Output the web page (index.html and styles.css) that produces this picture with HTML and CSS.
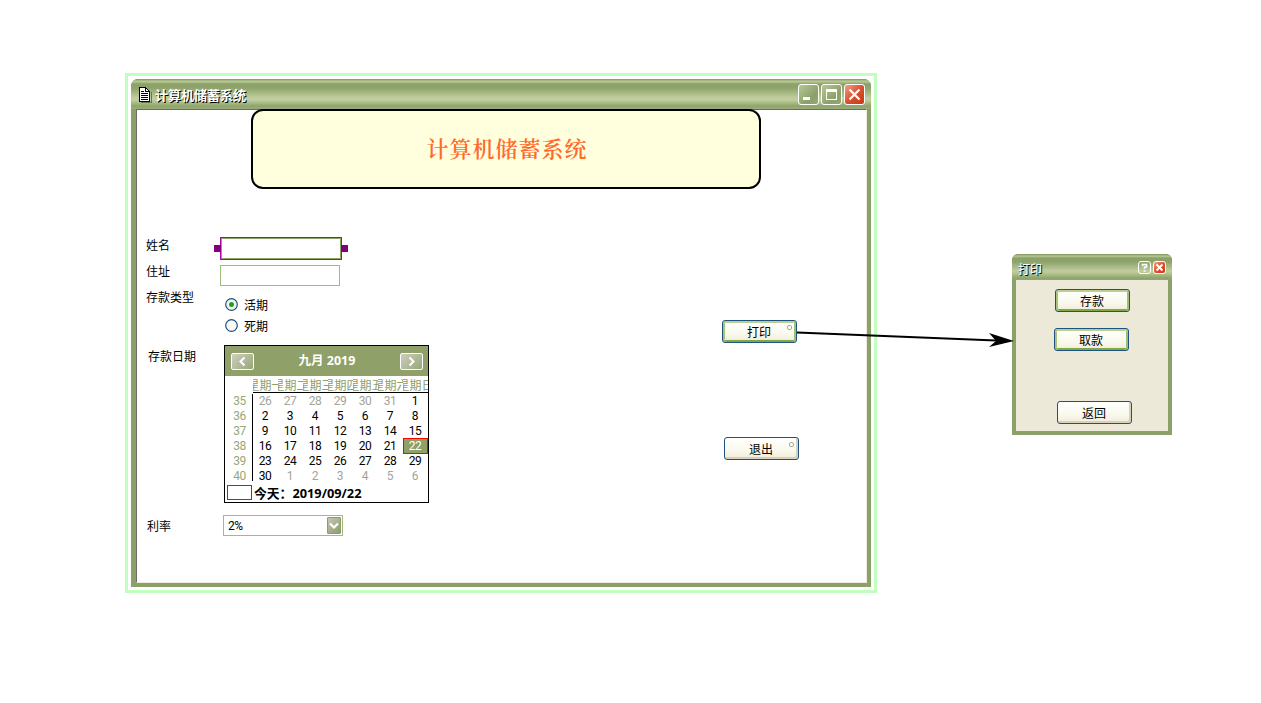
FILE: index.html
```html
<!DOCTYPE html>
<html lang="zh-CN">
<head>
<meta charset="utf-8">
<title>计算机储蓄系统</title>
<link rel="stylesheet" href="styles.css">
</head>
<body>
<main class="canvas">
  <section class="selection">
    <div class="window">
      <header class="titlebar">
        <svg class="doc-icon" width="14" height="16" viewBox="0 0 14 16" shape-rendering="crispEdges"><path d="M3 15h10V5h1v11H3z" fill="#66784a"/><path d="M1 0h7v1h1v1h1v1h1v1h1v11H1z" fill="#000"/><path d="M2 1h5v4h4v9H2zM8 2v2h2V3H9V2z" fill="#fff"/><path d="M3 4h3v1H3zM3 6h7v1H3zM3 8h7v1H3zM3 10h7v1H3zM3 12h7v1H3z" fill="#000"/></svg>
        <h1 class="caption">计算机储蓄系统</h1>
        <div class="controls">
          <span class="control"><svg width="17" height="17"><path d="M3 11h7v3H3z" fill="#fff"/></svg></span>
          <span class="control"><svg width="17" height="17"><path d="M3 3h11v11H3zM4 6v7h9V6z" fill="#fff" fill-rule="evenodd"/></svg></span>
          <span class="control close"><svg width="17" height="17"><path d="M3.500 3.500l10 10M13.500 3.500l-10 10" stroke="#fff" stroke-width="2.200"/></svg></span>
        </div>
      </header>
      <div class="client">
        <div class="banner">计算机储蓄系统</div>
        <div class="content">
          <form class="form">
            <div class="row row-name"><label class="label">姓名</label><div class="field field-selected"><i class="handle handle-left"></i><i class="handle handle-right"></i></div></div>
            <div class="row row-address"><label class="label">住址</label><div class="field"></div></div>
            <div class="row row-type"><label class="label">存款类型</label>
              <div class="radios">
                <span class="radio"><svg width="13" height="13"><circle cx="6.500" cy="6.500" r="5.800" fill="#f4f5f0" stroke="#1d5281" stroke-width="1.200"/><circle cx="6.500" cy="6.500" r="2.500" fill="#21a121"/></svg><span class="radio-text">活期</span></span>
                <span class="radio"><svg width="13" height="13"><circle cx="6.500" cy="6.500" r="5.800" fill="#f8f8f5" stroke="#1d5281" stroke-width="1.200"/></svg><span class="radio-text">死期</span></span>
              </div>
            </div>
            <div class="row row-date"><label class="label">存款日期</label>
              <div class="calendar">
                <div class="month">
                  <span class="nav"><svg width="21" height="15"><path d="M12.500 3.500l-4 4 4 4" fill="none" stroke="#fff" stroke-width="2"/></svg></span>
                  <strong>九月 2019</strong>
                  <span class="nav"><svg width="21" height="15"><path d="M8.500 3.500l4 4-4 4" fill="none" stroke="#fff" stroke-width="2"/></svg></span>
                </div>
                <div class="weekdays"><span>星期一</span><span>星期二</span><span>星期三</span><span>星期四</span><span>星期五</span><span>星期六</span><span>星期日</span></div>
                <div class="dates">
                  <div class="weeks"><span>35</span><span>36</span><span>37</span><span>38</span><span>39</span><span>40</span></div>
                  <div class="days">
                    <span class="dim">26</span><span class="dim">27</span><span class="dim">28</span><span class="dim">29</span><span class="dim">30</span><span class="dim">31</span><span>1</span>
                    <span>2</span><span>3</span><span>4</span><span>5</span><span>6</span><span>7</span><span>8</span>
                    <span>9</span><span>10</span><span>11</span><span>12</span><span>13</span><span>14</span><span>15</span>
                    <span>16</span><span>17</span><span>18</span><span>19</span><span>20</span><span>21</span><span class="selected">22</span>
                    <span>23</span><span>24</span><span>25</span><span>26</span><span>27</span><span>28</span><span>29</span>
                    <span>30</span><span class="dim">1</span><span class="dim">2</span><span class="dim">3</span><span class="dim">4</span><span class="dim">5</span><span class="dim">6</span>
                  </div>
                </div>
                <div class="today"><i class="today-box"></i><strong>今天：<span class="today-date">2019/09/22</span></strong></div>
              </div>
            </div>
            <div class="row row-rate"><label class="label">利率</label>
              <div class="combo"><span class="rate">2%</span><span class="arrow"><svg width="14" height="17"><path d="M3 6.500l4 4 4-4" fill="none" stroke="#fff" stroke-width="2.200"/></svg></span></div>
            </div>
          </form>
          <div class="actions">
            <button class="button hot">打印<i class="port"></i></button>
            <button class="button exit">退出<i class="port"></i></button>
          </div>
        </div>
      </div>
    </div>
  </section>

  <section class="dialog">
    <header class="dialog-title">
      <h2 class="dialog-caption">打印</h2>
      <span class="mini"><svg width="11" height="11"><path d="M3.500 4V2.500h4V5h-2v2M4.500 9h2" fill="none" stroke="#fff" stroke-width="1.500"/></svg></span>
      <span class="mini close"><svg width="11" height="11"><path d="M2.500 2.500l6 6M8.500 2.500l-6 6" stroke="#fff" stroke-width="2"/></svg></span>
    </header>
    <div class="dialog-body">
      <button class="button hot deposit">存款</button>
      <button class="button hot withdraw">取款</button>
      <button class="button back">返回</button>
    </div>
  </section>

  <svg class="connector" width="220" height="24"><path d="M1 6.500L200 14.500" fill="none" stroke="#000" stroke-width="2"/><path d="M193 7l25 8-25 6 7-6z" fill="#000"/></svg>
</main>
</body>
</html>
```
FILE: styles.css
```css
* { box-sizing: border-box; }

body {
  margin: 0;
  background: #fff;
  color: #000;
  font: 12px/15px "Liberation Sans", "Noto Sans CJK SC", sans-serif;
}

h1, h2 { margin: 0; }

.canvas {
  position: relative;
  width: 1261px;
  height: 703px;
  overflow: hidden;
}

/* Main window */
.selection {
  position: absolute;
  left: 125px;
  top: 73px;
  width: 752px;
  height: 520px;
  padding: 3px;
  border: 3px solid #c0ffc0;
}

.window {
  display: flex;
  flex-direction: column;
  height: 508px;
  padding: 0 4px 4px;
  background: #8ba169;
  border-radius: 7px 7px 0 0;
}

.titlebar {
  display: flex;
  align-items: center;
  height: 30px;
  margin: 0 -4px;
  padding: 1px 6px 0 7px;
  border-radius: 7px 7px 0 0;
  background: linear-gradient(#8ba169 0 1px, #bdcb99 2px, #b3c18c 3px, #8ba169 5px, #8ea46b 9px, #c1cd9d 19px, #c1cd9d 21px, #8fa56d 27px, #9bac78 30px);
}

.doc-icon { flex: none; }

.caption {
  flex: 1;
  padding: 0 0 0 3px;
  color: #fff;
  font: bold 13px/18px "Noto Sans CJK SC", sans-serif;
  text-shadow: 1px 1px 0 #000;
}

.controls { display: flex; gap: 2px; }

.control {
  width: 21px;
  height: 21px;
  padding: 1px;
  border: 1px solid #fff;
  border-radius: 3px;
  background: linear-gradient(135deg, #b9c597, #8ba169 65%, #94a970);
}

.control svg, .mini svg, .nav svg, .arrow svg { display: block; }

.close { background: linear-gradient(135deg, #efa28b, #dc5030 50%, #c93910); }

.client {
  height: 474px;
  margin-left: 1px;
  border: solid;
  border-color: #6e6c60 #eeebdd #eeebdd #6e6c60;
  border-width: 1px;
  background: #fff;
}

.banner {
  position: relative;
  display: flex;
  align-items: center;
  justify-content: center;
  width: 510px;
  height: 80px;
  margin: -1px 0 0 114px;
  padding: 0 0 2px 2px;
  border: 2px solid #000;
  border-radius: 12px;
  background: #ffffde;
  color: #ff6a2a;
  font: 600 22px/30px "Noto Serif CJK SC", "Noto Sans CJK SC", serif;
  letter-spacing: 1px;
}

.content { display: flex; padding: 48px 0 0 9px; }
.form { width: 576px; }
.row { display: flex; align-items: flex-start; }

.label {
  flex: none;
  width: 74px;
  line-height: 16px;
}

.row-name { height: 28px; }
.row-address { height: 31px; }
.row-type { height: 49px; }
.row-date { height: 170px; }
.row-name .label { padding-top: 1px; }
.row-address .label { margin-top: -1px; }
.row-type .label { margin-top: -6px; }
.row-date .label { width: 78px; padding: 4px 0 0 2px; }
.row-rate .label { width: 77px; padding: 4px 0 0 1px; }

.field {
  width: 120px;
  height: 21px;
  border: 1px solid #a5b97f;
}

.field-selected {
  position: relative;
  width: 122px;
  height: 23px;
  border-color: #b000b0;
  box-shadow: inset 0 0 0 1px #8fa565;
}

.handle {
  position: absolute;
  top: 7px;
  width: 7px;
  height: 7px;
  background: #800080;
}
.handle-left { left: -7px; }
.handle-right { right: -7px; }

.radios { margin-top: -2px; padding-left: 5px; }

.radio {
  display: flex;
  align-items: center;
  gap: 5px;
  height: 21px;
  line-height: 16px;
}

.radio-text { padding: 2px 0 0 1px; }

/* Month calendar */
.calendar {
  width: 205px;
  height: 158px;
  border: 1px solid #000;
}

.month {
  display: flex;
  align-items: center;
  justify-content: space-between;
  height: 30px;
  padding: 0 5px 0 6px;
  background: #8fa069;
  color: #fff;
  font: 12.500px/18px "Open Sans", "Noto Sans CJK SC", sans-serif;
}

.nav {
  width: 23px;
  height: 17px;
  border: 1px solid #fff;
  border-radius: 2px;
  background: linear-gradient(135deg, #d0cdbf, #96a877);
}

.weekdays {
  display: flex;
  width: 175px;
  height: 17px;
  margin-left: 28px;
  border-bottom: 1px solid #000;
  color: #8fa069;
}

.weekdays span {
  display: flex;
  flex: none;
  justify-content: center;
  width: 25px;
  overflow: hidden;
  line-height: 20px;
  white-space: nowrap;
}

.dates {
  display: flex;
  padding: 1px 0 0 2px;
  font-family: Roboto, sans-serif;
  letter-spacing: -0.4px;
}
.weeks { width: 26px; color: #98a777; text-align: center; border-right: 1px solid #000; height: 87px; }
.weeks span { display: block; height: 15px; line-height: 15px; }
.days { display: grid; grid-template-columns: repeat(7, 25px); grid-auto-rows: 15px; height: 87px; text-align: center; }
.days span { padding-right: 1px; }
.days .dim { color: #a4a39a; }
.days .selected { outline: 1px solid #f00; outline-offset: -1px; margin-top: -1px; padding-top: 1px; background: #8fa069; color: #fff; line-height: 14px; }

.today {
  display: flex;
  align-items: center;
  gap: 2px;
  height: 21px;
  padding: 2px 0 0 2px;
  font: 12.800px/16px "Open Sans", "Noto Sans CJK SC", sans-serif;
}

.today-box { width: 25px; height: 15px; border: 1px solid #f00; }

.combo {
  display: flex;
  align-items: center;
  justify-content: space-between;
  width: 120px;
  height: 21px;
  padding: 1px 1px 1px 4px;
  border: 1px solid #a5b97f;
}

.rate {
  padding-top: 1px;
  font-family: Roboto, sans-serif;
  letter-spacing: -0.5px;
}

.arrow {
  width: 14px;
  height: 17px;
  border: 1px solid #8b9d6d;
  border-radius: 1px;
  background: linear-gradient(135deg, #c7c6b2, #8b9d6d);
}

.arrow svg { margin: -1px; }

/* Buttons */
.button {
  position: relative;
  display: block;
  width: 75px;
  height: 23px;
  padding: 0 1px 0 0;
  border: 1px solid #1d5281;
  border-radius: 3px;
  background: linear-gradient(#fff, #fbfaef 55%, #f0ecd9);
  box-shadow: inset -2px -2px 0 #d6d0bc;
  color: #000;
  font: 12px/20px "Noto Sans CJK SC", sans-serif;
}

.hot { box-shadow: inset 0 2px 0 #bccf91, inset 2px 0 0 #a9c477, inset -2px 0 0 #a3bd70, inset 0 -2px 0 #80a846; }

.port {
  position: absolute;
  top: 4px;
  right: 4px;
  width: 5px;
  height: 5px;
  border: 1px solid #aaa99f;
  border-radius: 2px;
}

.actions { padding-top: 83px; }
.exit { margin: 94px 0 0 2px; }

/* Print dialog */
.dialog {
  position: absolute;
  left: 1012px;
  top: 254px;
  width: 160px;
  height: 181px;
  padding: 0 4px 4px;
  border-radius: 6px 6px 0 0;
  background: #8ba169;
}

.dialog-title {
  display: flex;
  align-items: center;
  gap: 2px;
  height: 26px;
  margin: 0 -4px;
  padding: 1px 6px 0;
  border-radius: 6px 6px 0 0;
  background: linear-gradient(#8ba169 0 1px, #bdcb99 2px, #8ba169 4px, #8ea46b 8px, #c1cd9d 17px, #b8c692 19px, #8fa56d 24px, #91a76f 26px);
}

.dialog-caption {
  flex: 1;
  padding-top: 3px;
  color: #fff;
  font: 12px/18px "Noto Sans CJK SC", sans-serif;
  text-shadow: 1px 1px 0 #000;
}

.mini {
  width: 13px;
  height: 13px;
  border: 1px solid #fff;
  border-radius: 3px;
}

.dialog-body {
  display: flex;
  flex-direction: column;
  height: 151px;
  padding: 9px 0 0 38px;
  background: #ece9d8;
}

.deposit { margin-left: 1px; }
.withdraw { margin-top: 16px; }
.back { margin: 50px 0 0 3px; }

.connector { position: absolute; left: 796px; top: 326px; }
```
